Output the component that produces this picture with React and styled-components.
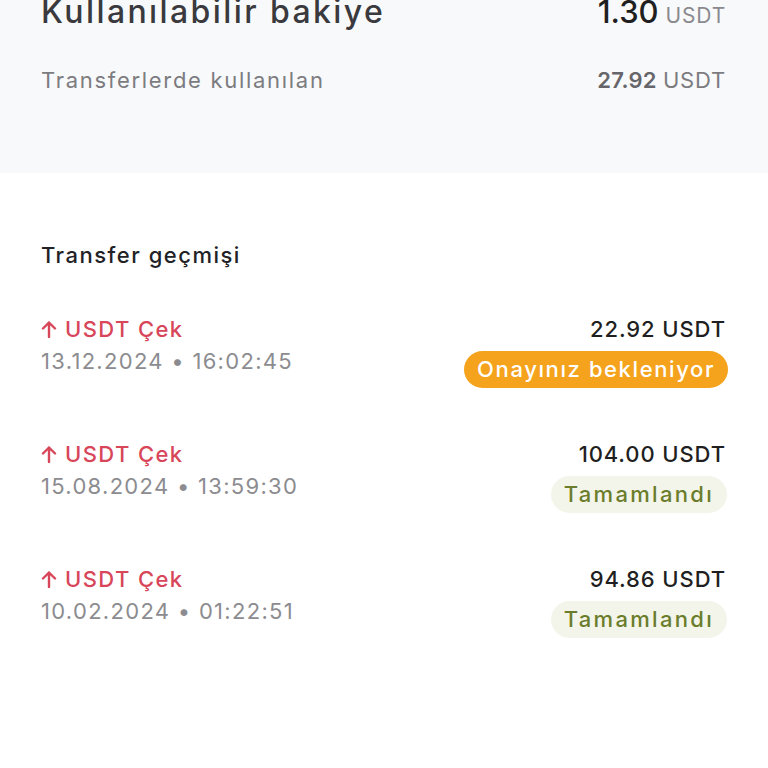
import React from "react";
import styled, { createGlobalStyle } from "styled-components";

const Global = createGlobalStyle`
  html, body { margin: 0; padding: 0; background: #ffffff; }
  body { font-family: "Inter", "Noto Sans", sans-serif; overflow: hidden; }
  * { box-sizing: border-box; }
`;

const Page = styled.div`
  width: 768px;
  height: 768px;
  overflow: hidden;
  background: #ffffff;
`;

const Summary = styled.section`
  background: #f8f9fb;
  margin-top: -16px;
  padding: 0 42px 0 41px;
  height: 189px;
  display: flex;
  flex-direction: column;
`;

const SummaryRow = styled.div`
  display: flex;
  justify-content: space-between;
  align-items: baseline;
  height: ${(p) => p.$h}px;
  line-height: ${(p) => p.$h}px;
`;

const BigLabel = styled.span`
  font-size: 32px;
  font-weight: 500;
  color: #3a3a3e;
  letter-spacing: 2.4px;
`;

const BigValue = styled.span`
  font-size: 31px;
  font-weight: 500;
  color: #1f1f22;
  letter-spacing: 0;
`;

const Unit = styled.span`
  font-size: 21px;
  font-weight: 400;
  color: #8a8a8e;
  margin-left: 7px;
  letter-spacing: 0.8px;
`;

const SubLabel = styled.span`
  font-size: 22px;
  color: #7c7c80;
  letter-spacing: 1.7px;
`;

const SubValue = styled.span`
  font-size: 22px;
  color: #66666a;
  font-weight: 600;
  letter-spacing: 0.3px;
`;

const SubUnit = styled.span`
  font-weight: 400;
  color: #7c7c80;
  margin-left: 6px;
  letter-spacing: 0.8px;
`;

const History = styled.section`
  padding: 64px 42px 0 41px;
  display: flex;
  flex-direction: column;
`;

const HistoryTitle = styled.h2`
  margin: 0 0 40px;
  font-size: 22px;
  font-weight: 500;
  color: #222226;
  line-height: 36px;
  letter-spacing: 1.5px;
`;

const List = styled.div`
  display: flex;
  flex-direction: column;
  gap: 29px;
`;

const Item = styled.div`
  display: flex;
  justify-content: space-between;
  align-items: flex-start;
  height: 96px;
`;

const Col = styled.div`
  display: flex;
  flex-direction: column;
  align-items: ${(p) => (p.$right ? "flex-end" : "flex-start")};
`;

const Kind = styled.div`
  display: flex;
  align-items: center;
  gap: 8px;
  font-size: 22px;
  font-weight: 500;
  color: #d8465a;
  line-height: 32px;
  letter-spacing: 1.4px;
`;

const DateLine = styled.div`
  font-size: 22px;
  color: #8c8c90;
  line-height: 32px;
  letter-spacing: 1.3px;
`;

const Amount = styled.div`
  font-size: 22px;
  font-weight: 500;
  color: #1f1f22;
  line-height: 32px;
  letter-spacing: 0.9px;
`;

const Badge = styled.div`
  margin-top: 6px;
  height: 37px;
  line-height: 37px;
  padding: 0 13px;
  border-radius: 19px;
  font-size: 22px;
  font-weight: 500;
  letter-spacing: ${(p) => (p.$pending ? "1.6px" : "2.3px")};
  margin-right: ${(p) => (p.$pending ? "-2px" : "-1px")};
  background: ${(p) => (p.$pending ? "#f5a21c" : "#f3f5ea")};
  color: ${(p) => (p.$pending ? "#ffffff" : "#6b7d2c")};
`;

const Arrow = () => (
  <svg width="16" height="18" viewBox="0 0 16 18" fill="none">
    <path d="M8 17V2.5M2 8.5L8 2.5L14 8.5" stroke="#d8465a" strokeWidth="2.4" strokeLinecap="round" strokeLinejoin="round" />
  </svg>
);

const rows = [
  { date: "13.12.2024", time: "16:02:45", amount: "22.92 USDT", status: "Onayınız bekleniyor", pending: true },
  { date: "15.08.2024", time: "13:59:30", amount: "104.00 USDT", status: "Tamamlandı", pending: false },
  { date: "10.02.2024", time: "01:22:51", amount: "94.86 USDT", status: "Tamamlandı", pending: false },
];

export default function App() {
  return (
    <Page>
      <Global />
      <Summary>
        <SummaryRow $h={56}>
          <BigLabel>Kullanılabilir bakiye</BigLabel>
          <BigValue>
            1.30<Unit>USDT</Unit>
          </BigValue>
        </SummaryRow>
        <SummaryRow $h={80}>
          <SubLabel>Transferlerde kullanılan</SubLabel>
          <SubValue>
            27.92<SubUnit>USDT</SubUnit>
          </SubValue>
        </SummaryRow>
      </Summary>
      <History>
        <HistoryTitle>Transfer geçmişi</HistoryTitle>
        <List>
          {rows.map((r) => (
            <Item key={r.date}>
              <Col>
                <Kind>
                  <Arrow />
                  USDT Çek
                </Kind>
                <DateLine>
                  {r.date} • {r.time}
                </DateLine>
              </Col>
              <Col $right>
                <Amount>{r.amount}</Amount>
                <Badge $pending={r.pending}>{r.status}</Badge>
              </Col>
            </Item>
          ))}
        </List>
      </History>
    </Page>
  );
}
